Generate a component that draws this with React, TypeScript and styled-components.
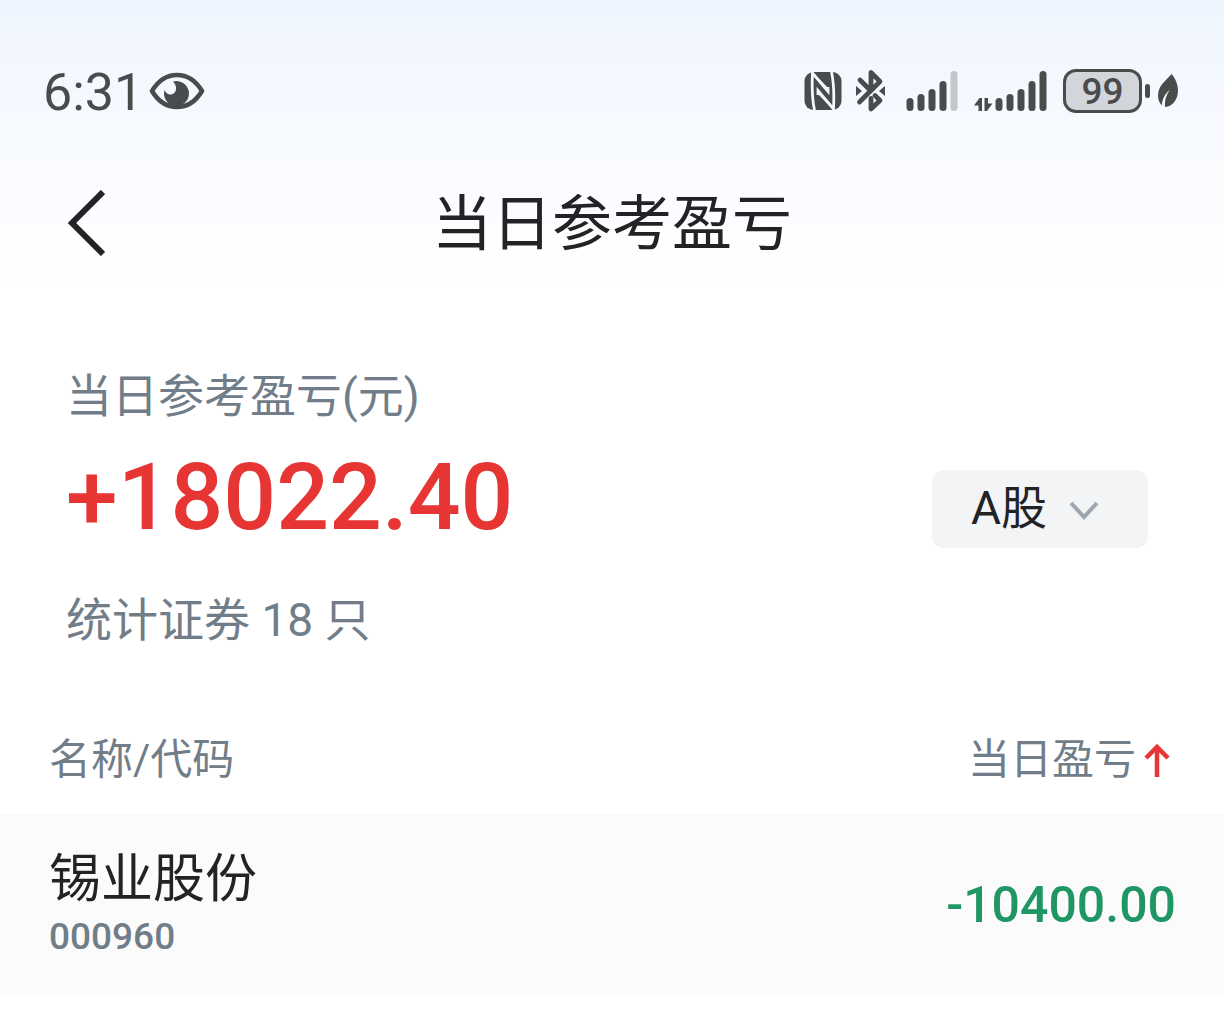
import React, { useState } from "react";
import styled, { createGlobalStyle } from "styled-components";

const ink = "#222324";
const muted = "#717d88";
const rise = "#e63533";
const fall = "#1f9663";
const statusInk = "#4a4b4d";

const GlobalStyle = createGlobalStyle`
  * { box-sizing: border-box; }
  body {
    margin: 0;
    background: #fff;
    color: ${ink};
    font-family: Roboto, "Noto Sans CJK SC", sans-serif;
  }
`;

const Page = styled.div`
  min-height: 100vh;
  background: linear-gradient(180deg, #eff5fe 0, #f9fbff 160px, #fff 290px);
`;

const StatusBar = styled.div`
  display: flex;
  align-items: center;
  justify-content: space-between;
  height: 160px;
  padding: 22px 45px 0 43px;
  color: ${statusInk};
`;

const StatusGroup = styled.div<{ $gap: number }>`
  display: flex;
  align-items: center;
  gap: ${(p) => p.$gap}px;
`;

const Clock = styled.time`
  padding-top: 4px;
  font-size: 52px;
  line-height: 60px;
`;

const Battery = styled.div`
  display: flex;
  align-items: center;
  gap: 3px;
  &::after {
    content: "";
    width: 5px;
    height: 14px;
    border-radius: 3px;
    background: ${statusInk};
  }
`;

const BatteryLevel = styled.div`
  width: 79px;
  height: 44px;
  border: 3px solid ${statusInk};
  border-radius: 13px;
  background: #d2d5da;
  font-size: 37px;
  font-weight: 500;
  line-height: 40px;
  text-align: center;
`;

const Header = styled.header`
  display: grid;
  grid-template-columns: 120px 1fr 120px;
  align-items: center;
  height: 130px;
`;

const BackButton = styled.button`
  display: flex;
  padding: 0 0 4px 67px;
  border: 0;
  background: none;
  color: ${ink};
`;

const Title = styled.h1`
  margin: 0;
  font-size: 60px;
  font-weight: 400;
  line-height: 72px;
  text-align: center;
`;

const Summary = styled.section`
  display: flex;
  align-items: center;
  justify-content: space-between;
  padding: 76px 76px 0 66px;
`;

const SummaryText = styled.p`
  margin: 0;
  color: ${muted};
  font-size: 46px;
  line-height: 60px;
`;

const Total = styled.p`
  margin: 16px 0 36px;
  color: ${rise};
  font-size: 93px;
  font-weight: 500;
  line-height: 112px;
`;

const MarketPicker = styled.label`
  position: relative;
  display: flex;
  margin-top: 2px;
  svg {
    position: absolute;
    top: 31px;
    right: 49px;
    pointer-events: none;
  }
`;

const MarketSelect = styled.select`
  appearance: none;
  width: 216px;
  height: 78px;
  padding: 0 0 2px 39px;
  border: 0;
  border-radius: 12px;
  background: #f3f4f6;
  color: ${ink};
  font: inherit;
  font-size: 46px;
`;

const Holdings = styled.table`
  width: 100%;
  margin-top: 56px;
  border-collapse: collapse;
`;

const HeadCell = styled.th<{ $end?: boolean }>`
  height: 108px;
  padding: ${(p) => (p.$end ? "0 54px 0 0" : "0 0 0 49px")};
  color: ${muted};
  font-size: 42px;
  font-weight: 400;
  line-height: 56px;
  text-align: ${(p) => (p.$end ? "right" : "left")};
`;

const SortButton = styled.button`
  display: inline-flex;
  align-items: center;
  gap: 8px;
  padding: 0;
  border: 0;
  background: none;
  color: inherit;
  font: inherit;
  svg { color: ${rise}; }
`;

const Row = styled.tr`
  height: 182px;
  background: #fbfbfb;
`;

const NameCell = styled.td`
  padding: 0 0 0 49px;
`;

const StockName = styled.div`
  font-size: 52px;
  line-height: 64px;
`;

const StockCode = styled.div`
  color: ${muted};
  font-size: 37px;
  font-weight: 500;
  line-height: 50px;
`;

const ProfitCell = styled.td`
  padding: 0 48px 0 0;
  color: ${fall};
  font-size: 50px;
  font-weight: 500;
  text-align: right;
`;

const EyeIcon = () => (
  <svg width="56" height="38" viewBox="0 0 56 38" fill="none" aria-hidden="true">
    <path d="M3 19C9 9 17 3 28 3s19 6 25 16C47 29 39 35 28 35S9 29 3 19Z" stroke="currentColor" strokeWidth="4.6" strokeLinejoin="round" />
    <path d="M24 9.500A12.500 12.500 0 1 1 15.500 18c1 3 4 5 7 4.500 5-1 6.500-8 1.500-13Z" fill="currentColor" />
  </svg>
);

const NfcIcon = () => (
  <svg width="38" height="40" viewBox="0 0 38 40" fill="none" aria-hidden="true">
    <rect x="0.500" y="1" width="37" height="38" rx="9" fill="currentColor" />
    <path d="M10.500 39C8 28 8 12 8.500 2L24 20.500V16M27.500 1C30 12 30 28 29.500 38L14 19.500V24" stroke="#f5f8fe" strokeWidth="2.800" />
    <path d="M8.500 2 24 22v-5L8.500 1ZM29.500 38 14 18v5l15.500 16Z" fill="#f5f8fe" />
  </svg>
);

const BluetoothIcon = () => (
  <svg width="30" height="44" viewBox="0 0 30 44" fill="none" aria-hidden="true">
    <g stroke="currentColor" strokeWidth="4.800" strokeLinecap="round" strokeLinejoin="round">
      <path d="M3.500 33 24 12.500l-9-9V21M4 11l9 9" />
      <path d="M15 29.500V40l9-8.500-5-5" />
    </g>
    <path d="M0 17l6 5-6 5ZM29 17l-6 5 6 5Z" fill="currentColor" />
  </svg>
);

const barTops = [28, 24, 19, 11, 1];

const SignalIcon = ({ weak }: { weak?: boolean }) => (
  <svg width="52" height="42" viewBox="0 0 52 42" aria-hidden="true">
    {barTops.map((top, i) => (
      <rect key={top} x={i * 11 + 0.5} y={top} width="7" height={41 - top} rx="3.500" fill={weak && i === 4 ? "#c3c6cb" : "currentColor"} />
    ))}
  </svg>
);

const DataIcon = () => (
  <svg width="19" height="42" viewBox="0 0 19 42" fill="currentColor" aria-hidden="true">
    <path d="M0 35.500 5.500 28H8v13H4.500v-5.500ZM10.500 28H14v5.500h4.500L13 41h-2.500Z" />
  </svg>
);

const LeafIcon = () => (
  <svg width="22" height="34" viewBox="0 0 22 34" fill="none" aria-hidden="true">
    <path d="M14.500 0C9 7 1 11 1 22c0 4 1.500 7 4 9.500 0-6 2.500-11 7.500-15.500-3 5-5 10-4.500 17 8-.5 13-8 13-16.500C21 10 18 4 14.500 0Z" fill="currentColor" />
  </svg>
);

const BackIcon = () => (
  <svg width="38" height="66" viewBox="0 0 38 66" fill="none" aria-hidden="true">
    <path d="M36 2 5 33l31 31" stroke="currentColor" strokeWidth="6" />
  </svg>
);

const ChevronIcon = () => (
  <svg width="30" height="20" viewBox="0 0 30 20" fill="none" aria-hidden="true">
    <path d="M2 2l13 14L28 2" stroke="#9da6af" strokeWidth="4" />
  </svg>
);

const SortIcon = () => (
  <svg width="26" height="34" viewBox="0 0 26 34" fill="none" aria-hidden="true">
    <path d="M13 34V4M2 15 13 4l11 11" stroke="currentColor" strokeWidth="4.500" />
  </svg>
);

const holdings = [{ name: "锡业股份", code: "000960", profit: "-10400.00" }];

export default function App() {
  const [market, setMarket] = useState("A股");
  return (
    <Page>
      <GlobalStyle />
      <StatusBar>
        <StatusGroup $gap={6}>
          <Clock>6:31</Clock>
          <EyeIcon />
        </StatusGroup>
        <StatusGroup $gap={20}>
          <StatusGroup $gap={14}>
            <NfcIcon />
            <BluetoothIcon />
          </StatusGroup>
          <StatusGroup $gap={16}>
            <SignalIcon weak />
            <StatusGroup $gap={2}>
              <DataIcon />
              <SignalIcon />
            </StatusGroup>
            <StatusGroup $gap={7}>
              <Battery>
                <BatteryLevel>99</BatteryLevel>
              </Battery>
              <LeafIcon />
            </StatusGroup>
          </StatusGroup>
        </StatusGroup>
      </StatusBar>
      <Header>
        <BackButton aria-label="返回">
          <BackIcon />
        </BackButton>
        <Title>当日参考盈亏</Title>
      </Header>
      <main>
        <Summary>
          <div>
            <SummaryText>当日参考盈亏(元)</SummaryText>
            <Total>+18022.40</Total>
            <SummaryText>统计证券 18 只</SummaryText>
          </div>
          <MarketPicker>
            <MarketSelect aria-label="市场" value={market} onChange={(e) => setMarket(e.target.value)}>
              <option>A股</option>
            </MarketSelect>
            <ChevronIcon />
          </MarketPicker>
        </Summary>
        <Holdings>
          <thead>
            <tr>
              <HeadCell>名称/代码</HeadCell>
              <HeadCell $end>
                <SortButton>
                  当日盈亏
                  <SortIcon />
                </SortButton>
              </HeadCell>
            </tr>
          </thead>
          <tbody>
            {holdings.map((h) => (
              <Row key={h.code}>
                <NameCell>
                  <StockName>{h.name}</StockName>
                  <StockCode>{h.code}</StockCode>
                </NameCell>
                <ProfitCell>{h.profit}</ProfitCell>
              </Row>
            ))}
          </tbody>
        </Holdings>
      </main>
    </Page>
  );
}
